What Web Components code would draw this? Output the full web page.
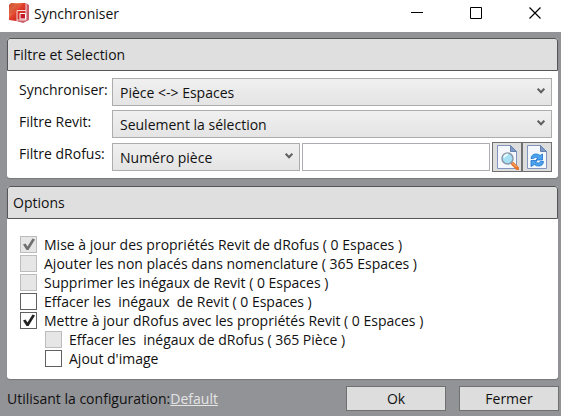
<!DOCTYPE html>
<html lang="fr">
<head>
<meta charset="UTF-8">
<meta name="viewport" content="width=device-width, initial-scale=1">
<title>Synchroniser</title>
<style>
    html, body {
        height: 100%;
        margin: 0;
    }
    body {
        --text-color: #111;
        --line-color: #acacac;
        --face-color: #dddddd;
        font: 14px/19px "Segoe UI", "Open Sans", "Noto Sans", sans-serif;
        color: var(--text-color);
        background: #929397;
    }
</style>
</head>
<body>
<sync-dialog></sync-dialog>

<script>
// Title bar with the application logo and the window buttons
class TitleBar extends HTMLElement {
    connectedCallback() {
        this.attachShadow({ mode: 'open' }).innerHTML = `
            <style>
                :host {
                    display: flex;
                    align-items: flex-start;
                    height: 32px;
                    background: #fff;
                }
                .logo {
                    margin: 2px 4px 0 8px;
                }
                h1 {
                    flex: 1;
                    margin: 0;
                    font-size: 14px;
                    font-weight: 400;
                    line-height: 28px;
                }
                .controls {
                    display: flex;
                    gap: 7px;
                }
                button {
                    width: 52px;
                    height: 26px;
                    padding: 0;
                    border: 0;
                    background: none;
                }
                button svg {
                    display: block;
                    margin: auto;
                }
            </style>
            <svg class="logo" width="22" height="22" viewBox="0 0 22 22" aria-hidden="true">
                <defs>
                    <linearGradient id="red" x1="0" y1="0" x2="1" y2="1">
                        <stop offset="0" stop-color="#c9432c"/>
                        <stop offset=".25" stop-color="#ef8a5c"/>
                        <stop offset=".45" stop-color="#e0402a"/>
                        <stop offset="1" stop-color="#b5101e"/>
                    </linearGradient>
                </defs>
                <path d="M3 1h15v17l-3 2-14-2V3z" fill="url(#red)"/>
                <path d="M1 12q7-1 10-10H3L1 3z" fill="#d2472c" opacity=".6"/>
                <path d="M18 1l3 2v15l-6 3-6-2 9-2z" fill="#cb5c68"/>
                <path d="M9 19V8.500h9M18 1v17M9 18h9" fill="none" stroke="#f6d8d8"/>
                <path d="M12 11.500h5.500v5.500H12z" fill="#c41a28" stroke="#fff"/>
            </svg>
            <h1><slot></slot></h1>
            <div class="controls">
                <button type="button" aria-label="Réduire">
                    <svg width="12" height="12" stroke="#000"><path d="M0 5.500h12"/></svg>
                </button>
                <button type="button" aria-label="Agrandir">
                    <svg width="12" height="12" stroke="#000" fill="none"><path d="M.5.500h11v11H.5z"/></svg>
                </button>
                <button type="button" aria-label="Fermer la fenêtre">
                    <svg width="12" height="12" stroke="#000" stroke-width="1.200"><path d="M.5.500l11 11M11.500.500l-11 11"/></svg>
                </button>
            </div>
        `;
    }
}
customElements.define('title-bar', TitleBar);


// White box with a grey heading
class GroupPanel extends HTMLElement {
    connectedCallback() {
        this.attachShadow({ mode: 'open' }).innerHTML = `
            <style>
                :host {
                    display: block;
                    background: #fff;
                    border-radius: 3px;
                    box-shadow: 0 1px 1px #77787b;
                }
                h2 {
                    margin: 0;
                    padding: 0 5px;
                    border: 1px solid #555;
                    border-radius: 3px 3px 0 0;
                    background: #dfdfdf;
                    font-size: 14px;
                    font-weight: 400;
                    line-height: 31px;
                }
            </style>
            <section>
                <h2>${this.getAttribute('heading')}</h2>
                <slot></slot>
            </section>
        `;
    }
}
customElements.define('group-panel', GroupPanel);


// Label + drop-down, anything slotted goes to the right of the drop-down
class ComboField extends HTMLElement {
    connectedCallback() {
        this.attachShadow({ mode: 'open' }).innerHTML = `
            <style>
                :host {
                    display: flex;
                    align-items: center;
                }
                label {
                    flex: none;
                    align-self: flex-start;
                    width: 93px;
                    line-height: 23px;
                    white-space: nowrap;
                }
                .combo {
                    display: grid;
                    flex: 1;
                    align-items: center;
                }
                :host([compact]) .combo {
                    flex: 0 0 188px;
                }
                select, svg {
                    grid-area: 1 / 1;
                }
                select {
                    appearance: none;
                    box-sizing: border-box;
                    width: 100%;
                    height: 28px;
                    margin: 0;
                    padding: 0 24px 0 7px;
                    border: 1px solid var(--line-color);
                    border-radius: 0;
                    background: linear-gradient(#f0f0f0, #e4e4e4);
                    color: inherit;
                    font: inherit;
                }
                svg {
                    justify-self: end;
                    margin: 0 7px 2px 0;
                    pointer-events: none;
                }
            </style>
            <label for="choice">${this.getAttribute('label')}</label>
            <div class="combo">
                <select id="choice"><option>${this.getAttribute('value')}</option></select>
                <svg width="8" height="6" fill="none" stroke="#606060" stroke-width="2" aria-hidden="true"><path d="M.7.700L4 4.300 7.300.700"/></svg>
            </div>
            <slot></slot>
        `;
    }
}
customElements.define('combo-field', ComboField);


// Filter text box with the search and refresh buttons
class FilterBox extends HTMLElement {
    connectedCallback() {
        this.attachShadow({ mode: 'open' }).innerHTML = `
            <style>
                :host {
                    display: flex;
                    flex: 1;
                    align-items: center;
                    min-width: 0;
                    margin-left: 2px;
                }
                input {
                    box-sizing: border-box;
                    flex: 1;
                    min-width: 0;
                    height: 28px;
                    margin-right: 2px;
                    padding: 0 6px;
                    border: 1px solid #abadb3;
                    font: inherit;
                }
                button {
                    box-sizing: border-box;
                    width: 30px;
                    height: 30px;
                    padding: 0;
                    border: 1px solid #707070;
                    background: var(--face-color);
                }
                svg {
                    display: block;
                    margin: auto;
                }
            </style>
            <input type="text" aria-label="Valeur du filtre dRofus">
            <button type="button" aria-label="Rechercher">
                <svg width="24" height="26" viewBox="0 0 24 26">
                    <path d="M2.500 1.500h13l6 6v17h-19z" fill="#f4f8fd" stroke="#8195bd"/>
                    <path d="M15.500 1.500v6h6z" fill="#7d9bc9" stroke="#6680b0"/>
                    <path d="M17.500 19.500l5 5" stroke="#e8752c" stroke-width="3.500" stroke-linecap="round"/>
                    <path d="M17 18.500l4.500 4.500" stroke="#ffc27a"/>
                    <circle cx="12.500" cy="14.500" r="5.500" fill="#a5e0f5" stroke="#8d9aab" stroke-width="1.500"/>
                    <path d="M9 13.500q1-3 4-3" fill="none" stroke="#e8fbff" stroke-width="2"/>
                </svg>
            </button>
            <button type="button" aria-label="Actualiser">
                <svg width="24" height="26" viewBox="0 0 24 26">
                    <path d="M2.500 1.500h13l6 6v17h-19z" fill="#f4f8fd" stroke="#8195bd"/>
                    <path d="M15.500 1.500v6h6z" fill="#7d9bc9" stroke="#6680b0"/>
                    <path d="M6 14.500q.5-4.500 5-4.500 2.500 0 4 1.500l2.500-1.500v6H11l2-2q-3.500-1.500-4.500.5z" fill="#4aa3ee" stroke="#1d72cc" stroke-width=".8"/>
                    <path d="M18.500 17.500q-.5 4.500-5 4.500-2.500 0-4-1.500L6 22.500v-6h6l-1.500 2q3.500 1.500 5-1z" fill="#4aa3ee" stroke="#1d72cc" stroke-width=".8"/>
                </svg>
            </button>
        `;
    }
}
customElements.define('filter-box', FilterBox);


// Tick box with its text, attributes: checked, disabled, nested
class TickOption extends HTMLElement {
    connectedCallback() {
        const checked = this.hasAttribute('checked') ? 'checked' : '';
        const disabled = this.hasAttribute('disabled') ? 'disabled' : '';

        this.attachShadow({ mode: 'open' }).innerHTML = `
            <style>
                :host {
                    display: flex;
                }
                :host([nested]) {
                    margin-left: 25px;
                }
                label {
                    display: flex;
                    align-items: center;
                    gap: 7px;
                }
                .text {
                    white-space: pre;
                }
                .box {
                    display: grid;
                }
                input, svg {
                    grid-area: 1 / 1;
                }
                input {
                    appearance: none;
                    box-sizing: border-box;
                    width: 17px;
                    height: 17px;
                    margin: 0;
                    border: 1px solid #606060;
                    background: #fff;
                }
                input:disabled {
                    border-color: #bcbcbc;
                    background: #e6e6e6;
                }
                svg {
                    visibility: hidden;
                    fill: #222;
                    pointer-events: none;
                }
                input:checked + svg {
                    visibility: visible;
                }
                input:disabled + svg {
                    fill: #707070;
                }
            </style>
            <label>
                <span class="box">
                    <input type="checkbox" ${checked} ${disabled}>
                    <svg width="17" height="17" aria-hidden="true"><path d="M3 8.500L5.500 7.500 7.500 10.500 12.500 2.500 15 3.500 8.500 14H6.500z"/></svg>
                </span>
                <span class="text"><slot></slot></span>
            </label>
        `;
    }
}
customElements.define('tick-option', TickOption);


class PushButton extends HTMLElement {
    connectedCallback() {
        this.attachShadow({ mode: 'open' }).innerHTML = `
            <style>
                :host {
                    display: block;
                    width: 100px;
                }
                button {
                    box-sizing: border-box;
                    width: 100%;
                    height: 25px;
                    padding: 0;
                    border: 1px solid #707070;
                    background: var(--face-color);
                    color: inherit;
                    font: inherit;
                }
            </style>
            <button type="button"><slot></slot></button>
        `;
    }
}
customElements.define('push-button', PushButton);


// The whole dialog
class SyncDialog extends HTMLElement {
    connectedCallback() {
        this.attachShadow({ mode: 'open' }).innerHTML = `
            <style>
                :host {
                    display: flex;
                    flex-direction: column;
                    min-height: 100%;
                }
                main {
                    display: flex;
                    flex: 1;
                    flex-direction: column;
                    gap: 8px;
                    padding: 6px 3px 0 7px;
                }
                .fields {
                    display: flex;
                    flex-direction: column;
                    gap: 4px;
                    padding: 7px 6px 6px 12px;
                }
                .options {
                    padding: 16px 13px 11px;
                }
                footer {
                    display: flex;
                    align-items: center;
                    gap: 13px;
                    padding: 7px 2px 5px 7px;
                }
                p {
                    flex: 1;
                    margin: 0;
                }
                a {
                    color: #e4e4e4;
                }
            </style>
            <title-bar>Synchroniser</title-bar>
            <main>
                <group-panel heading="Filtre et Selection">
                    <div class="fields">
                        <combo-field label="Synchroniser:" value="Pièce &lt;-&gt; Espaces"></combo-field>
                        <combo-field label="Filtre Revit:" value="Seulement la sélection"></combo-field>
                        <combo-field label="Filtre dRofus:" value="Numéro pièce" compact>
                            <filter-box></filter-box>
                        </combo-field>
                    </div>
                </group-panel>
                <group-panel heading="Options">
                    <div class="options">
                        <tick-option checked disabled>Mise à jour des propriétés Revit de dRofus ( 0 Espaces )</tick-option>
                        <tick-option disabled>Ajouter les non placés dans nomenclature ( 365 Espaces )</tick-option>
                        <tick-option disabled>Supprimer les inégaux de Revit ( 0 Espaces )</tick-option>
                        <tick-option>Effacer les  inégaux  de Revit ( 0 Espaces )</tick-option>
                        <tick-option checked>Mettre à jour dRofus avec les propriétés Revit ( 0 Espaces )</tick-option>
                        <tick-option nested disabled>Effacer les  inégaux de dRofus ( 365 Pièce )</tick-option>
                        <tick-option nested>Ajout d'image</tick-option>
                    </div>
                </group-panel>
            </main>
            <footer>
                <p>Utilisant la configuration:<a href="#">Default</a></p>
                <push-button>Ok</push-button>
                <push-button>Fermer</push-button>
            </footer>
        `;
    }
}
customElements.define('sync-dialog', SyncDialog);
</script>
</body>
</html>
